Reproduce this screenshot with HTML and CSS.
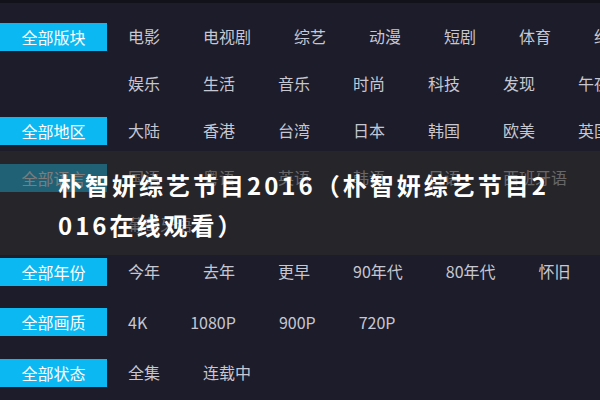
FILE: index.html
```html
<!DOCTYPE html>
<html lang="zh-CN">
<head>
<meta charset="utf-8">
<title>朴智妍综艺节目2016</title>
<link rel="stylesheet" href="styles.css">
</head>
<body>
<div class="page">
  <div class="filters">
    <div class="group">
      <span class="label">全部版块</span>
      <ul class="items">
        <li>电影</li><li>电视剧</li><li>综艺</li><li>动漫</li><li>短剧</li><li>体育</li><li>纪录片</li>
        <li>娱乐</li><li>生活</li><li>音乐</li><li>时尚</li><li>科技</li><li>发现</li><li>午夜</li>
      </ul>
    </div>
    <div class="group">
      <span class="label">全部地区</span>
      <ul class="items">
        <li>大陆</li><li>香港</li><li>台湾</li><li>日本</li><li>韩国</li><li>欧美</li><li>英国</li>
      </ul>
    </div>
    <div class="group">
      <span class="label">全部语言</span>
      <ul class="items">
        <li>国语</li><li>粤语</li><li>英语</li><li>韩语</li><li>日语</li><li>西班牙语</li>
        <li>葡萄牙语</li>
      </ul>
    </div>
    <div class="group">
      <span class="label">全部年份</span>
      <ul class="items">
        <li>今年</li><li>去年</li><li>更早</li><li>90年代</li><li>80年代</li><li>怀旧</li>
      </ul>
    </div>
    <div class="group spaced">
      <span class="label">全部画质</span>
      <ul class="items">
        <li>4K</li><li>1080P</li><li>900P</li><li>720P</li>
      </ul>
    </div>
    <div class="group spaced">
      <span class="label">全部状态</span>
      <ul class="items">
        <li>全集</li><li>连载中</li>
      </ul>
    </div>
  </div>
  <div class="overlay">
    <h1 class="title">朴智妍综艺节目2016（朴智妍综艺节目2016在线观看）</h1>
  </div>
</div>
</body>
</html>
```

FILE: styles.css
```css
html, body {
  margin: 0;
  padding: 0;
  overflow: hidden;
  background: #1c1c2b;
}

body {
  font-family: "Noto Sans CJK SC", "Noto Sans", sans-serif;
  width: 600px;
  height: 400px;
}

.page {
  position: relative;
  width: 600px;
  height: 400px;
  box-sizing: border-box;
  border-top: 3px solid #12121b;
  padding-top: 10px;
  overflow: hidden;
}

.filters {
  display: flex;
  flex-direction: column;
}

.group {
  display: flex;
  align-items: flex-start;
}

.group.spaced {
  margin-top: 3.5px;
}

.label {
  flex: none;
  width: 107px;
  height: 28px;
  margin-top: 9.5px;
  background: #0bb8f1;
  color: #ffffff;
  font-size: 16px;
  line-height: 28px;
  text-align: center;
}

.items {
  flex: none;
  display: flex;
  flex-wrap: wrap;
  column-gap: 43px;
  width: 532px;
  margin: 0 0 0 21px;
  padding: 0;
  list-style: none;
}

.items li {
  font-size: 16px;
  line-height: 47px;
  color: #c6c7d1;
  white-space: nowrap;
}

.overlay {
  position: absolute;
  left: 0;
  right: 0;
  top: 148px;
  padding: 14px 45px 10px 58px;
  background: rgba(45, 44, 42, 0.62);
}

.title {
  margin: 0;
  color: #ffffff;
  font-size: 24px;
  font-weight: 700;
  letter-spacing: 3px;
  line-height: 40px;
  word-break: break-all;
}
```
